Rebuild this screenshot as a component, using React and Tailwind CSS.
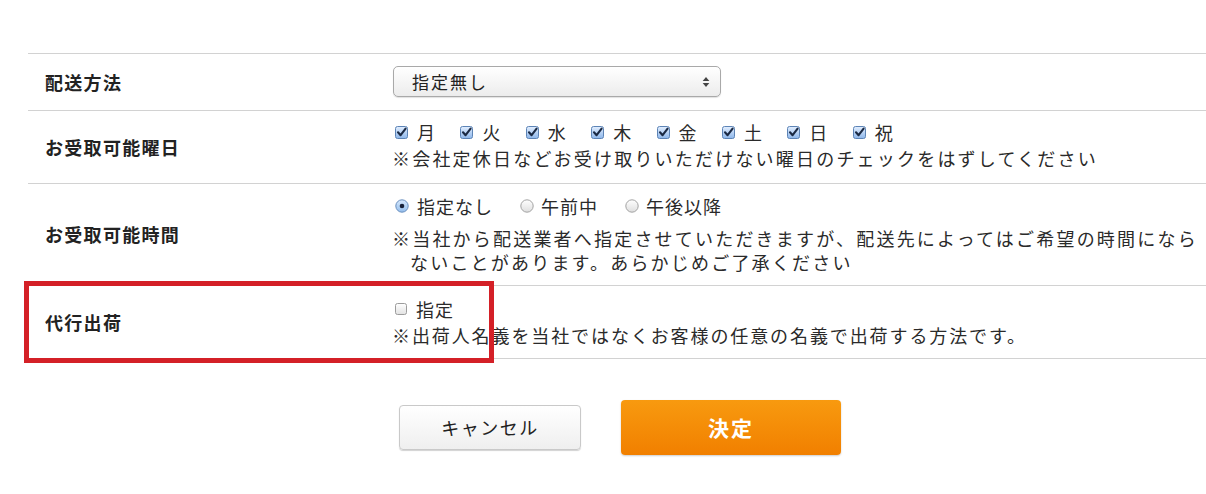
import React from "react";

const jp = { fontFamily: '"Noto Sans CJK JP", "Noto Sans", sans-serif' };

const CheckBox = ({ checked }) =>
  checked ? (
    <svg width="13" height="13" viewBox="0 0 13 13" className="shrink-0">
      <defs>
        <linearGradient id="cbOn" x1="0" y1="0" x2="0" y2="1">
          <stop offset="0" stopColor="#e3efff" />
          <stop offset="1" stopColor="#8db6ea" />
        </linearGradient>
      </defs>
      <rect x="0.5" y="0.5" width="12" height="12" rx="2" fill="url(#cbOn)" stroke="#5d84b6" />
      <path d="M3 6.3 L5.6 9.2 L10.6 2.6" fill="none" stroke="#1b2a44" strokeWidth="2.1" strokeLinecap="round" strokeLinejoin="round" />
    </svg>
  ) : (
    <svg width="12" height="12" viewBox="0 0 12 12" className="shrink-0">
      <defs>
        <linearGradient id="cbOff" x1="0" y1="0" x2="0" y2="1">
          <stop offset="0" stopColor="#ffffff" />
          <stop offset="1" stopColor="#e2e2e2" />
        </linearGradient>
      </defs>
      <rect x="0.5" y="0.5" width="11" height="11" rx="2" fill="url(#cbOff)" stroke="#9c9c9c" />
    </svg>
  );

const Radio = ({ on }) => (
  <svg width="14" height="14" viewBox="0 0 14 14" className="shrink-0">
    <defs>
      <linearGradient id="rdOn" x1="0" y1="0" x2="0" y2="1">
        <stop offset="0" stopColor="#d8e9fd" />
        <stop offset="1" stopColor="#93bdec" />
      </linearGradient>
      <linearGradient id="rdOff" x1="0" y1="0" x2="0" y2="1">
        <stop offset="0" stopColor="#ffffff" />
        <stop offset="1" stopColor="#dedede" />
      </linearGradient>
    </defs>
    <circle cx="7" cy="7" r="6.2" fill={on ? "url(#rdOn)" : "url(#rdOff)"} stroke={on ? "#6a8fbe" : "#a3a3a3"} />
    {on && <circle cx="7" cy="7" r="2.3" fill="#18223a" />}
  </svg>
);

const days = ["月", "火", "水", "木", "金", "土", "日", "祝"];

const Row = ({ label, children, className }) => (
  <div className="flex border-b border-[#d2d2d2]">
    <div className="w-[364px] shrink-0 flex items-center pl-[17px] text-[18px] font-bold text-[#222] tracking-[1.3px]">
      {label}
    </div>
    <div className={`flex-1 text-[18px] text-[#2a2a2a] tracking-[2.2px] ${className}`}>{children}</div>
  </div>
);

export default function App() {
  return (
    <div className="relative w-[1206px] h-[494px] bg-white overflow-hidden" style={jp}>
      <div className="ml-[28px] mt-[53px] border-t border-[#d2d2d2]">
        <Row label="配送方法" className="pt-[12px] pb-[13px]">
          <div className="w-[328px] h-[31px] rounded-[5px] border border-[#a9a9a9] bg-gradient-to-b from-white to-[#ececec] shadow-[0_1px_1px_rgba(0,0,0,0.12)] flex items-center justify-between pl-[18px] pr-[10px] ml-[1px]">
            <span className="text-[17px] text-[#222] tracking-[2px]">指定無し</span>
            <svg width="8" height="12" viewBox="0 0 8 12">
              <path d="M4 1 L7.3 5 L0.7 5 Z" fill="#444" />
              <path d="M4 11 L7.3 7 L0.7 7 Z" fill="#444" />
            </svg>
          </div>
        </Row>

        <Row label="お受取可能曜日" className="pt-[9px] pb-[13px]">
          <div className="h-[24px] flex items-center ml-[3px]">
            {days.map((d) => (
              <div key={d} className="w-[65.4px] flex items-center gap-[9px]">
                <CheckBox checked />
                <span>{d}</span>
              </div>
            ))}
          </div>
          <div className="mt-[2px] leading-[24px] whitespace-nowrap">
            ※会社定休日などお受け取りいただけない曜日のチェックをはずしてください
          </div>
        </Row>

        <Row label="お受取可能時間" className="pt-[10px] pb-[11px]">
          <div className="h-[24px] flex items-center ml-[3px] tracking-[1px]">
            <div className="flex items-center gap-[8px] w-[125px]">
              <Radio on />
              <span>指定なし</span>
            </div>
            <div className="flex items-center gap-[7px] w-[105px]">
              <Radio />
              <span>午前中</span>
            </div>
            <div className="flex items-center gap-[7px]">
              <Radio />
              <span>午後以降</span>
            </div>
          </div>
          <div className="mt-[8px] leading-[24px] whitespace-nowrap">
            <div>※当社から配送業者へ指定させていただきますが、配送先によってはご希望の時間になら</div>
            <div className="pl-[18px]">ないことがあります。あらかじめご了承ください</div>
          </div>
        </Row>

        <Row label="代行出荷" className="pt-[11px] pb-[11px]">
          <div className="h-[24px] flex items-center gap-[9px] ml-[3px] tracking-[1px]">
            <CheckBox />
            <span>指定</span>
          </div>
          <div className="mt-[2px] leading-[24px] whitespace-nowrap tracking-[1.9px]">
            ※出荷人名義を当社ではなくお客様の任意の名義で出荷する方法です。
          </div>
        </Row>
      </div>

      <div className="flex items-center gap-[40px] ml-[399px] mt-[41px]">
        <button className="w-[182px] h-[45px] rounded-[4px] border border-[#c9c9c9] bg-gradient-to-b from-white to-[#efefef] shadow-[0_1px_1px_rgba(0,0,0,0.18)] text-[18px] text-[#222] tracking-[1.5px]">
          キャンセル
        </button>
        <button className="w-[220px] h-[55px] rounded-[4px] bg-gradient-to-b from-[#f89a0f] to-[#f17f00] shadow-[0_1px_2px_rgba(0,0,0,0.2)] text-[21px] font-bold text-white tracking-[2px]">
          決定
        </button>
      </div>

      {/* annotation box */}
      <div className="absolute left-[24px] top-[281px] w-[470px] h-[82px] border-[5px] border-[#d42027] pointer-events-none" />
    </div>
  );
}
